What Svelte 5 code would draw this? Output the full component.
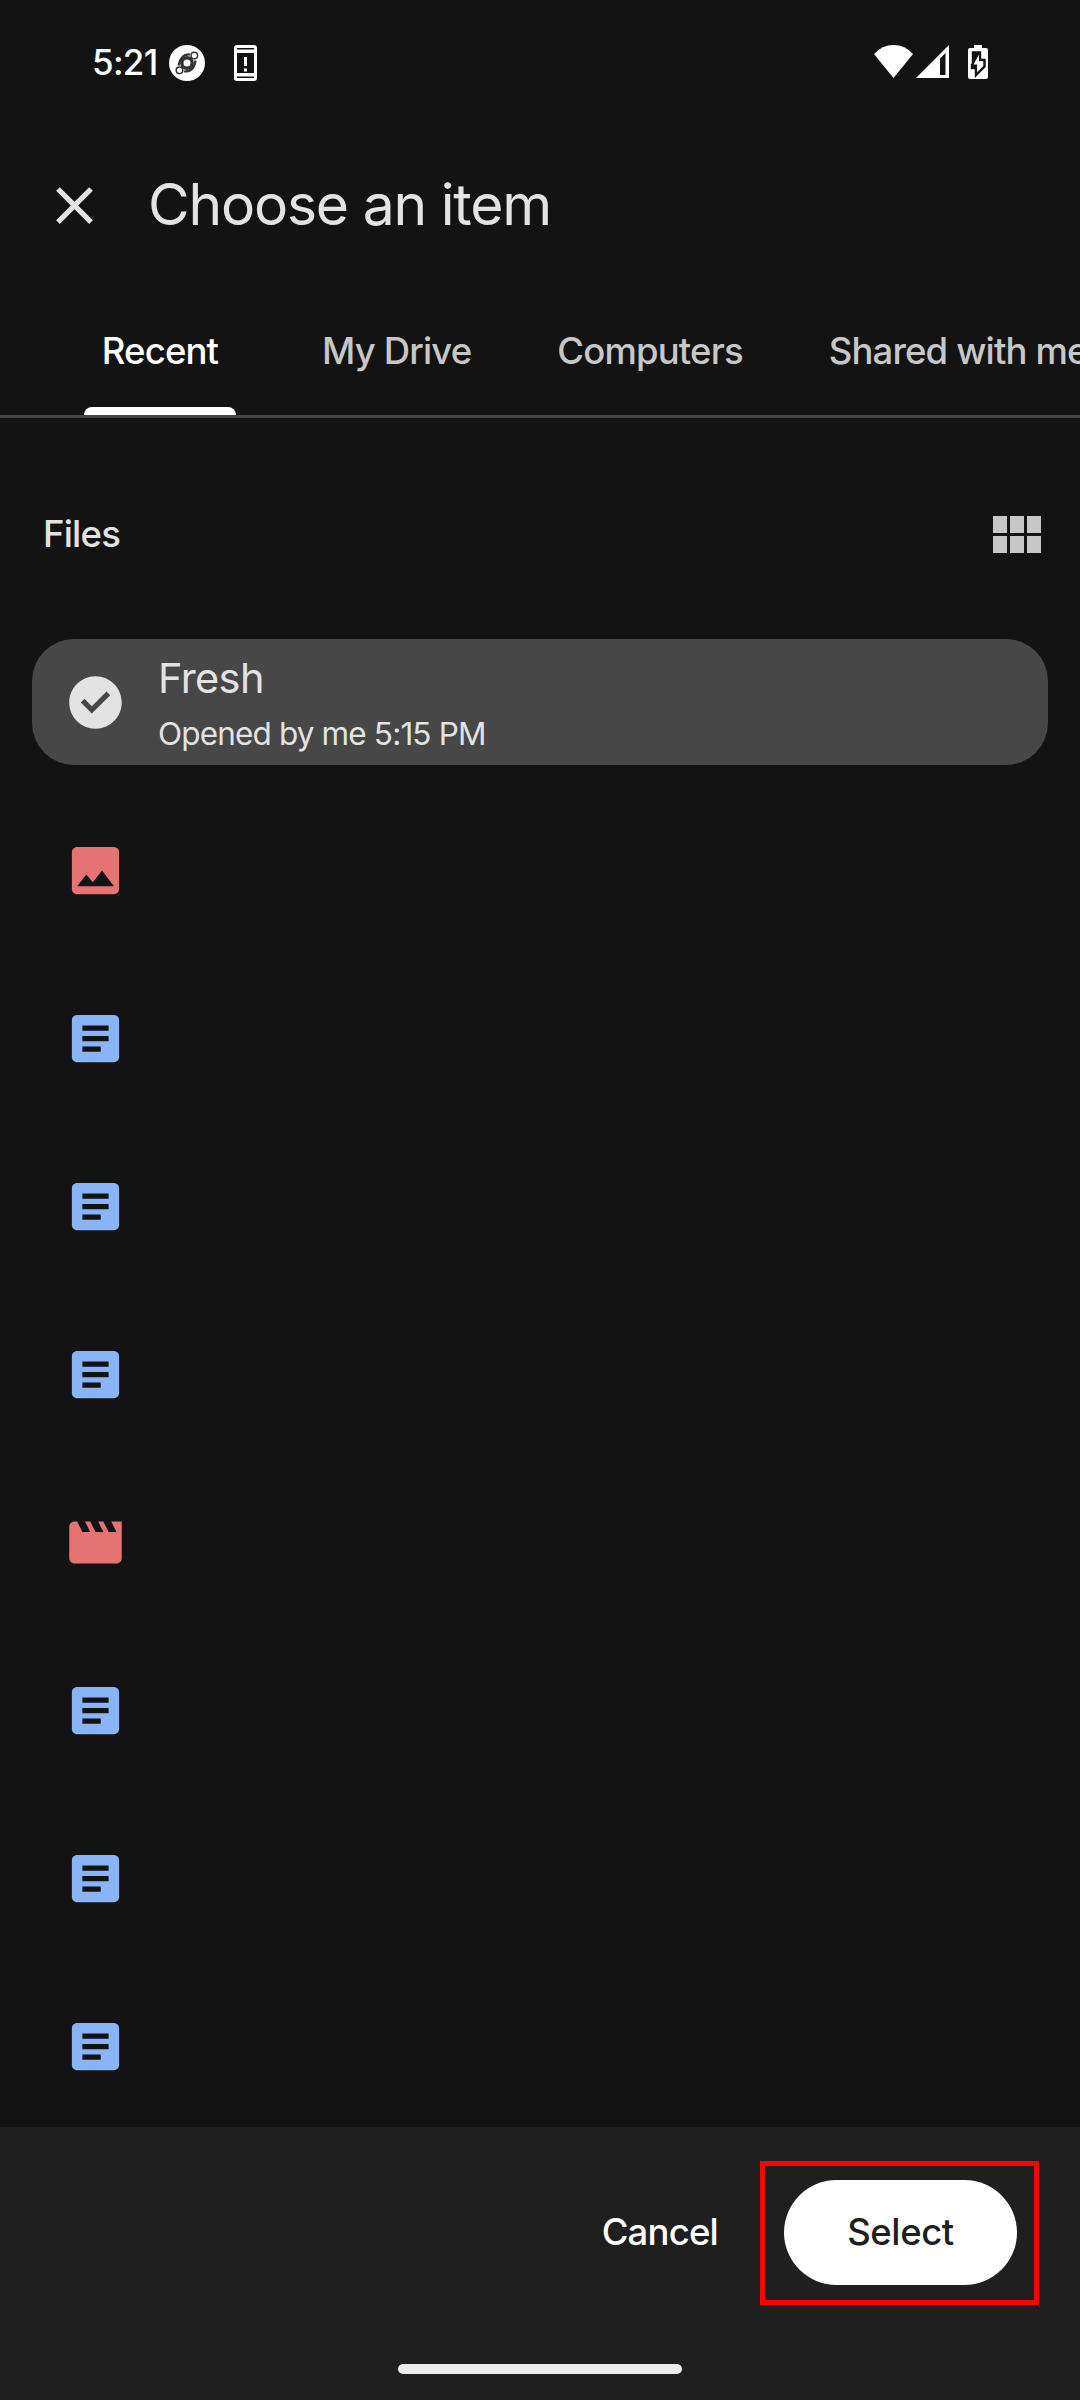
<script lang="ts">
    let tabs = ['Recent', 'My Drive', 'Computers', 'Shared with me'];
    let activeTab = 0;

    let files = [
        { kind: 'selected', name: 'Fresh', detail: 'Opened by me 5:15 PM' },
        { kind: 'image' },
        { kind: 'doc' },
        { kind: 'doc' },
        { kind: 'doc' },
        { kind: 'video' },
        { kind: 'doc' },
        { kind: 'doc' },
        { kind: 'doc' },
    ];

    const icons: Record<string, string> = {
        selected: 'M12 2C6.48 2 2 6.48 2 12s4.480 10 10 10 10-4.480 10-10S17.520 2 12 2zm-1.400 14.200l-4.200-4.200 1.400-1.400 2.800 2.800 5.600-5.600 1.400 1.400z',
        image: 'M21 19V5c0-1.1-.9-2-2-2H5c-1.1 0-2 .9-2 2v14c0 1.1.9 2 2 2h14c1.1 0 2-.9 2-2zM8.5 13.5l2.5 3.01L14.5 12l4.5 6H5l3.5-4.5z',
        doc: 'M19 3H5c-1.1 0-2 .9-2 2v14c0 1.1.9 2 2 2h14c1.1 0 2-.9 2-2V5c0-1.1-.9-2-2-2zm-5 14H7v-2h7v2zm3-4H7v-2h10v2zm0-4H7V7h10v2z',
        video: 'M18 4l2 4h-3l-2-4h-2l2 4h-3l-2-4H8l2 4H7L5 4H4c-1.1 0-1.99.9-1.99 2L2 18c0 1.1.9 2 2 2h16c1.1 0 2-.9 2-2V4h-4z',
    };
</script>

<main>
    <div class="status">
        <span class="time">5:21</span>
        <svg class="helium" viewBox="0 0 36 36">
            <circle cx="18" cy="18" r="18" fill="#fff" />
            <g fill="none" stroke="#333">
                <path stroke-width="2.2" d="M21 9.500Q12 8.500 9.500 20.500M26.500 15.500Q25 27 15 26.500" />
                <circle cx="18" cy="18" r="5.2" stroke-width="3.4" />
                <circle cx="25.300" cy="10.500" r="3.300" stroke-width="1.500" fill="#fff" />
                <circle cx="10.500" cy="25.300" r="3.300" stroke-width="1.500" fill="#fff" />
            </g>
        </svg>
        <svg class="phone" viewBox="0 0 23 36">
            <path fill="#fff" fill-rule="evenodd" d="M3 0h17a3 3 0 0 1 3 3v30a3 3 0 0 1-3 3H3a3 3 0 0 1-3-3V3a3 3 0 0 1 3-3zM3 3v1.500h17V3zM3 8v20h17V8zM3 31.500V33h17v-1.500zM10 12h3v9h-3zM10 23.500h3v3h-3z" />
        </svg>
        <div class="right">
            <svg width="39" height="33" viewBox="0 0 39 33"><path fill="#fff" d="M0 9Q8 0 19.500 0T39 9L19.500 33z" /></svg>
            <svg width="33" height="33" viewBox="0 0 33 33"><path fill="#fff" fill-rule="evenodd" d="M33 0v33H0zM29.500 8L24 13.500V30h5.500z" /></svg>
            <svg class="battery" width="20" height="34" viewBox="0 0 20 34">
                <path fill="#fff" d="M6 0h8v3h4a2 2 0 0 1 2 2v27a2 2 0 0 1-2 2H2a2 2 0 0 1-2-2V5a2 2 0 0 1 2-2h4z" />
                <path fill="#fff" stroke="#131313" stroke-width="2.400" d="M12 7.500H5V20H4v3h4v7L16.500 21.500V15h-4.500z" />
                <path fill="#131313" d="M5 8h7v7L8 23H5z" />
                <path fill="#fff" d="M11 9.500L5.500 19.500h3.500V27L15 16.500h-4z" />
            </svg>
        </div>
    </div>

    <header>
        <svg class="icon" viewBox="0 0 24 24"><path fill="#e3e3e3" d="M19 6.410L17.590 5 12 10.590 6.410 5 5 6.410 10.590 12 5 17.590 6.410 19 12 13.410 17.590 19 19 17.590 13.410 12z" /></svg>
        <h1>Choose an item</h1>
    </header>

    <nav>
        {#each tabs as tab, i}
            <div class="tab" class:active={activeTab == i}><span>{tab}</span></div>
        {/each}
    </nav>

    <div class="heading">
        <h2>Files</h2>
        <div class="grid">
            {#each Array(6) as _}<i></i>{/each}
        </div>
    </div>

    <div class="list">
        {#each files as file}
            <div class="row {file.kind}">
                <svg class="icon" viewBox="0 0 24 24"><path fill="currentColor" d={icons[file.kind]} /></svg>
                {#if file.name}
                    <div class="text">
                        <p class="name">{file.name}</p>
                        <p class="detail">{file.detail}</p>
                    </div>
                {/if}
            </div>
        {/each}
    </div>

    <footer>
        <div class="actions">
            <button class="cancel">Cancel</button>
            <div class="highlight">
                <button class="select">Select</button>
            </div>
        </div>
        <div class="home"></div>
    </footer>
</main>

<style>
    :global(body) {
        background-color: #131313;
    }

    main {
        width: 1080px;
        height: 2400px;
        overflow: hidden;

        display: flex;
        flex-direction: column;

        background-color: #131313;
        color: #e3e3e3;
        font-family: Inter, Roboto, sans-serif;
    }

    svg {
        display: block;
        flex-shrink: 0;
    }

    h1, h2, p {
        margin: 0;
        font-weight: 400;
        white-space: nowrap;
    }

    .status {
        height: 125px;
        box-sizing: border-box;
        padding: 0 92px;

        display: flex;
        align-items: center;
    }

    .time {
        width: 77px;
        padding-bottom: 2px;
        font-size: 35px;
        font-weight: 500;
        letter-spacing: -0.7px;
        color: #fff;
    }

    .helium {
        width: 36px;
        height: 36px;
    }

    .phone {
        width: 23px;
        height: 36px;
        margin-left: 28.5px;
    }

    .right {
        margin-left: auto;
        padding-bottom: 1px;
        display: flex;
        gap: 3px;
    }

    .battery {
        margin-left: 16px;
    }

    .icon {
        width: 63px;
        height: 63px;
    }

    header {
        height: 160px;
        padding-left: 43px;

        display: flex;
        align-items: center;
        gap: 42px;
    }

    h1 {
        font-size: 57px;
        line-height: 80px;
        letter-spacing: -1.2px;
    }

    nav {
        height: 130px;
        border-bottom: 3px solid #444;
        padding-left: 84px;

        display: flex;
        gap: 86px;
    }

    .tab {
        display: flex;
        flex-direction: column;
        flex-shrink: 0;
        height: 130px;

        font-size: 36.5px;
        font-weight: 500;
        line-height: 132px;
        letter-spacing: -0.85px;
        text-align: center;
        white-space: nowrap;
        color: #c7c7c7;
    }

    .tab.active {
        width: 152px;
        color: #fff;
    }

    .tab.active::after {
        content: '';
        height: 8px;
        margin-top: -10px;
        border-radius: 8px 8px 0 0;
        background-color: #fff;
    }

    .heading {
        height: 233px;
        padding: 0 39px 0 43px;
        box-sizing: border-box;

        display: flex;
        align-items: center;
        justify-content: space-between;
    }

    h2 {
        padding-bottom: 2px;
        font-size: 36.5px;
        font-weight: 500;
        letter-spacing: -0.8px;
    }

    .grid {
        display: grid;
        grid-template-columns: repeat(3, 14px);
        grid-template-rows: repeat(2, 17px);
        gap: 3px;
    }

    .grid i {
        background-color: #c7c7c7;
    }

    .list {
        flex: 1;
        margin: -12px 32px 0;

        display: flex;
        flex-direction: column;
        gap: 42px;
    }

    .row {
        height: 126px;
        flex-shrink: 0;
        padding-left: 32px;

        display: flex;
        align-items: center;
        gap: 31px;

        border-radius: 42px;
        color: #8ab4f8;
    }

    .row.selected {
        background-color: #474747;
        color: #e3e3e3;
    }

    .row.image, .row.video {
        color: #e67373;
    }

    .text {
        padding-top: 4px;
    }

    .name {
        font-size: 41.5px;
        line-height: 56px;
        letter-spacing: -0.6px;
    }

    .detail {
        margin-top: 4px;
        font-size: 31.5px;
        line-height: 48px;
        letter-spacing: -0.85px;
    }

    footer {
        height: 273px;
        box-sizing: border-box;
        padding: 34px 41px 26px;

        display: flex;
        flex-direction: column;
        align-items: center;
        justify-content: space-between;

        background-color: #1f1f1f;
    }

    .actions {
        width: 100%;
        display: flex;
        align-items: center;
        justify-content: flex-end;
        gap: 42px;
    }

    button {
        border: none;
        padding: 0 0 2px;
        background-color: transparent;

        font-family: inherit;
        font-size: 36.5px;
        font-weight: 500;
        letter-spacing: -0.8px;
        color: #fff;
    }

    .highlight {
        border: 5px solid #f00;
        padding: 14px 17px 15px 19px;
    }

    .select {
        display: block;
        width: 233px;
        height: 105px;
        border-radius: 53px;
        background-color: #fff;
        letter-spacing: -0.4px;
        color: #1f1f1f;
    }

    .home {
        width: 284px;
        height: 10px;
        border-radius: 5px;
        background-color: #ececec;
    }
</style>
